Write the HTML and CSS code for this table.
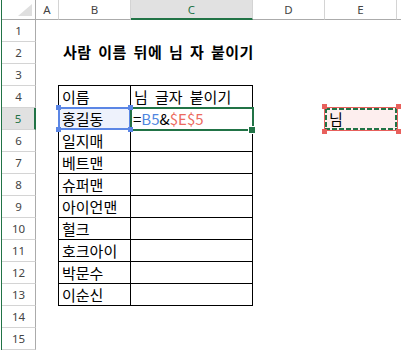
FILE: index.html
```html
<!DOCTYPE html>
<html lang="ko">
<head>
    <meta charset="UTF-8">
    <meta name="viewport" content="width=device-width, initial-scale=1.0">
    <title>님 자 붙이기</title>
    <link rel="stylesheet" href="styles.css">
</head>
<body>
    <div class="sheet">
        <!-- column headers -->
        <div class="corner"></div>
        <div class="col-head">A</div>
        <div class="col-head">B</div>
        <div class="col-head is-active">C</div>
        <div class="col-head">D</div>
        <div class="col-head">E</div>
        <div class="col-head col-rest"></div>

        <!-- row headers -->
        <div class="row-head">1</div>
        <div class="row-head">2</div>
        <div class="row-head">3</div>
        <div class="row-head">4</div>
        <div class="row-head is-active">5</div>
        <div class="row-head">6</div>
        <div class="row-head">7</div>
        <div class="row-head">8</div>
        <div class="row-head">9</div>
        <div class="row-head">10</div>
        <div class="row-head">11</div>
        <div class="row-head">12</div>
        <div class="row-head">13</div>
        <div class="row-head">14</div>
        <div class="row-head">15</div>

        <div class="title">사람 이름 뒤에 님 자 붙이기</div>

        <!-- B4:C13 -->
        <div class="list">
            <div class="cell">이름</div>
            <div class="cell">님 글자 붙이기</div>
            <div class="cell is-ref">홍길동<span class="dot dot-tl"></span><span class="dot dot-tr"></span><span class="dot dot-bl"></span><span class="dot dot-br"></span></div>
            <div class="cell is-current">=<span class="ref-b">B5</span>&amp;<span class="ref-e">$E$5</span></div>
            <div class="cell">일지매</div>
            <div class="cell"></div>
            <div class="cell">베트맨</div>
            <div class="cell"></div>
            <div class="cell">슈퍼맨</div>
            <div class="cell"></div>
            <div class="cell">아이언맨</div>
            <div class="cell"></div>
            <div class="cell">헐크</div>
            <div class="cell"></div>
            <div class="cell">호크아이</div>
            <div class="cell"></div>
            <div class="cell">박문수</div>
            <div class="cell"></div>
            <div class="cell">이순신</div>
            <div class="cell"></div>
        </div>

        <!-- E5, copied -->
        <div class="marquee">님<span class="dot dot-tl"></span><span class="dot dot-tr"></span><span class="dot dot-bl"></span><span class="dot dot-br"></span></div>
    </div>
</body>
</html>
```

FILE: styles.css
```css
* {
    box-sizing: border-box;
    margin: 0;
    padding: 0;
}

body {
    background-color: #fff;
    color: #000;
    font-family: "Noto Sans CJK KR", "Noto Sans", sans-serif;
    overflow: hidden;
}

.sheet {
    display: grid;
    grid-template-columns: 34px 23px 72px 122px 72px 72px 1fr;
    grid-template-rows: 20px repeat(15, 22px);
    margin-left: 1px;
    border-left: 1px solid #217346;
}

/* headers */
.corner,
.col-head {
    border-right: 1px solid #d4d4d4;
    border-bottom: 1px solid #ababab;
}

.corner {
    position: relative;
    border-right-color: #ababab;
}

.corner::after {
    content: "";
    position: absolute;
    right: 3px;
    bottom: 3px;
    width: 14px;
    height: 12px;
    background-color: #dfdfdf;
    clip-path: polygon(100% 0, 100% 100%, 0 100%);
}

.col-head,
.row-head {
    display: flex;
    align-items: center;
    justify-content: center;
    font-family: "Noto Sans", sans-serif;
    font-size: 11.5px;
    color: #444;
}

.col-rest {
    border-right: none;
}

.col-head.is-active {
    background-color: #e1e1e1;
    border-bottom: 2px solid #217346;
    color: #217346;
}

.row-head {
    grid-column: 1;
    border-right: 1px solid #ababab;
    border-bottom: 1px solid #d4d4d4;
}

.row-head.is-active {
    background-color: #e1e1e1;
    border-right: 2px solid #217346;
    color: #217346;
}

.title {
    grid-column: 3 / -1;
    grid-row: 3;
    display: flex;
    align-items: flex-end;
    padding: 0 0 3px 4px;
    font-size: 15px;
    font-weight: 700;
    letter-spacing: 0.5px;
    word-spacing: 2px;
    line-height: 18px;
    white-space: nowrap;
}

/* bordered list */
.list {
    grid-column: 3 / 5;
    grid-row: 5 / 15;
    margin: -1px 0 0 -1px;
    border-top: 1px solid #000;
    border-left: 1px solid #000;
    display: grid;
    grid-template-columns: 72px 122px;
    grid-template-rows: repeat(10, 22px);
}

.cell {
    border-right: 1px solid #000;
    border-bottom: 1px solid #000;
    padding: 0 3px;
    font-size: 15px;
    line-height: 21px;
    word-spacing: 3px;
    white-space: nowrap;
}

.cell.is-ref {
    position: relative;
    background-color: #eef2fc;
}

.cell.is-ref::after {
    content: "";
    position: absolute;
    inset: -1px;
    border: 2px solid #5b86e5;
}

.cell.is-current {
    position: relative;
    padding-left: 2px;
}

.cell.is-current::after {
    content: "";
    position: absolute;
    top: -1px;
    left: -1px;
    right: -2px;
    bottom: -2px;
    border: 2px solid #217346;
}

/* fill handle */
.cell.is-current::before {
    content: "";
    position: absolute;
    right: -4px;
    bottom: -5px;
    width: 6px;
    height: 6px;
    background-color: #217346;
    border: 1px solid #fff;
    z-index: 1;
}

.ref-b {
    color: #4f86e0;
}

.ref-e {
    color: #ec6a5e;
}

/* corner handles of a referenced range */
.dot {
    position: absolute;
    width: 5px;
    height: 5px;
    background-color: #5b86e5;
    z-index: 2;
}

.dot-tl { top: -3px; left: -3px; }
.dot-tr { top: -3px; right: -3px; }
.dot-bl { bottom: -3px; left: -3px; }
.dot-br { bottom: -3px; right: -3px; }

.marquee {
    grid-column: 6;
    grid-row: 6;
    position: relative;
    background-color: #fdeeee;
    padding-left: 4px;
    font-size: 15px;
    line-height: 21px;
}

.marquee::before {
    content: "";
    position: absolute;
    inset: -1px;
    border: 1px solid #e8605c;
}

/* dashed copy outline */
.marquee::after {
    content: "";
    position: absolute;
    inset: 0;
    background:
        repeating-linear-gradient(90deg, #217346 0 5px, transparent 5px 7px) top left / 100% 2px no-repeat,
        repeating-linear-gradient(90deg, #217346 0 5px, transparent 5px 7px) bottom left / 100% 2px no-repeat,
        repeating-linear-gradient(180deg, #217346 0 5px, transparent 5px 7px) top left / 2px 100% no-repeat,
        repeating-linear-gradient(180deg, #217346 0 5px, transparent 5px 7px) top right / 2px 100% no-repeat;
}

.marquee .dot {
    background-color: #e8605c;
}

.marquee .dot-tl,
.marquee .dot-tr { top: -4px; }

.marquee .dot-bl,
.marquee .dot-br { bottom: -4px; }

.marquee .dot-tl,
.marquee .dot-bl { left: -3px; }

.marquee .dot-tr,
.marquee .dot-br { right: -4px; }
```
